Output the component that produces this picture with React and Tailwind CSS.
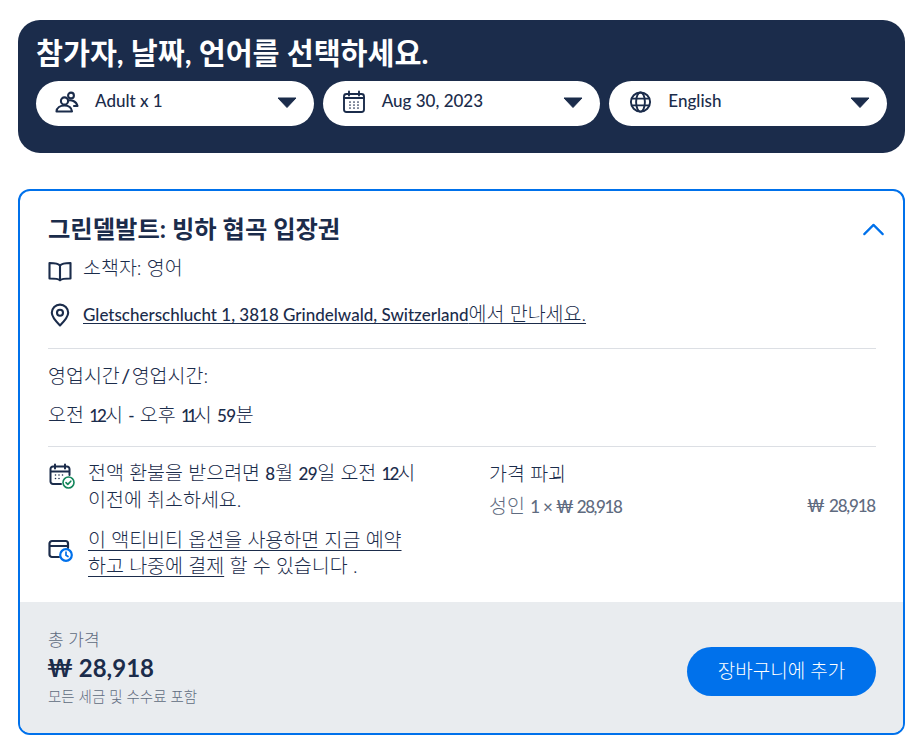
import React from 'react';
import { ChevronUp } from 'lucide-react';

const Caret = () => (
  <svg width="20" height="11" viewBox="0 0 20 11" className="-mt-[2px] ml-[1px] -mr-[1px] shrink-0">
    <path d="M1 1h18l-9 9.500z" fill="#1b2c4b" stroke="#1b2c4b" strokeLinejoin="round" />
  </svg>
);

const PeopleIcon = () => (
  <svg width="24" height="24" viewBox="0 0 24 24" fill="none" stroke="#1b2c4b" strokeWidth="2.100" strokeLinejoin="round" strokeLinecap="round">
    <circle cx="9.500" cy="11" r="3.600" />
    <circle cx="16" cy="5.500" r="2.900" />
    <path d="M1.500 21.500c.3-3.800 3.700-6 8-6s7 2.200 7.500 6z" />
    <path d="M13 10.500c3-.9 8.300.2 9.500 5.500h-3.500" />
  </svg>
);

const CalendarIcon = ({ size = 24 }) => (
  <svg width={size} height={size} viewBox="0 0 24 24" fill="none" stroke="#1b2c4b" strokeWidth="1.900" strokeLinecap="round">
    <rect x="2" y="4" width="20" height="18" rx="2.500" />
    <path d="M7 1.500v4M17 1.500v4M2 8h20" />
    <path d="M8 12h.01M12 12h.01M16 12h.01M8 15h.01M12 15h.01M16 15h.01M8 18h.01M12 18h.01M16 18h.01" strokeWidth="1.700" />
  </svg>
);

const GlobeIcon = () => (
  <svg width="24" height="24" viewBox="0 0 24 24" fill="none" stroke="#1b2c4b" strokeWidth="2" className="ml-[1px]">
    <circle cx="12" cy="12" r="10" />
    <ellipse cx="12" cy="12" rx="4.600" ry="10" />
    <path d="M2.600 8.500h18.800M2.600 15.500h18.800" />
  </svg>
);

const BookIcon = () => (
  <svg width="24" height="22" viewBox="0 0 24 22" fill="none" stroke="#1b2c4b" strokeWidth="2.100" strokeLinejoin="round" className="mt-[2px]">
    <path d="M12 5.500C10.500 3.500 8 3 1.500 3v15.500c6 0 9 .3 10.500 1.800 1.500-1.500 4.500-1.800 10.500-1.800V3C16 3 13.500 3.500 12 5.500zM12 5.500v14.800" />
  </svg>
);

const PinIcon = () => (
  <svg width="20" height="24" viewBox="0 0 20 24" fill="none" stroke="#1b2c4b" strokeWidth="2.100">
    <path d="M10 22.500C5 17.500 1.800 14 1.800 9.800a8.200 8.200 0 0 1 16.400 0c0 4.200-3.200 7.700-8.200 12.700z" strokeLinejoin="round" />
    <circle cx="10" cy="9.800" r="3" />
  </svg>
);

const CalendarCheckIcon = () => (
  <svg width="28" height="28" viewBox="0 0 28 28" fill="none" strokeLinecap="round">
    <path d="M13 21H5a2.500 2.500 0 0 1-2.500-2.500V6A2.500 2.500 0 0 1 5 3.500h14A2.500 2.500 0 0 1 21.500 6v6M2.500 8.500h19M7 1.500v4M17 1.500v4" stroke="#1b2c4b" strokeWidth="2" />
    <path d="M7.500 12h.01M11 12h.01M14.500 12h.01M7.500 15.500h.01M11 15.500h.01" stroke="#1b2c4b" strokeWidth="1.600" />
    <circle cx="20.500" cy="19.500" r="5.500" stroke="#12855a" strokeWidth="1.600" fill="#fff" />
    <path d="M18 19.600l1.800 1.800 3-3.200" stroke="#12855a" strokeWidth="1.600" strokeLinejoin="round" />
  </svg>
);

const CardClockIcon = () => (
  <svg width="26" height="24" viewBox="0 0 26 24" fill="none" strokeLinecap="round">
    <path d="M11 19H4a2.500 2.500 0 0 1-2.500-2.500v-11A2.500 2.500 0 0 1 4 3h13.500A2.500 2.500 0 0 1 20 5.500V10M1.500 8h18.500" stroke="#1b2c4b" strokeWidth="2.200" />
    <circle cx="18" cy="17" r="5.800" fill="#fff" stroke="#0071eb" strokeWidth="2.200" />
    <path d="M18 14v3.200l2 1.300" stroke="#0071eb" strokeWidth="1.700" />
  </svg>
);

// latin bits run smaller and heavier than the hangul around them
const L = ({ children, className = '' }) => <span className={`text-[17px] font-medium ${className}`}>{children}</span>;

const Pill = ({ icon, label }) => (
  <div className="flex h-[45px] flex-1 items-center rounded-full bg-white pl-[19px] pr-[18px]">
    <div className="-mt-[4px] flex w-[24px] justify-center">{icon}</div>
    <span className="ml-[16px] -mt-[5px] flex-1 text-[17px] font-medium text-[#1b2c4b]">{label}</span>
    <Caret />
  </div>
);

export default function App() {
  return (
    <div className="min-h-[743px] bg-white pl-[18px] pr-[4px] pt-[20px] font-['Lato','Noto_Sans_CJK_KR',sans-serif] text-[#1b2c4b]">
      {/* selector header */}
      <div className="h-[133px] rounded-[22px] bg-[#1b2c4b] px-[18px] pt-[15px]">
        <h1 className="text-[29.3px] leading-[36px] font-bold text-white">참가자, 날짜, 언어를 선택하세요.</h1>
        <div className="mt-[10px] flex gap-[9px]">
          <Pill icon={<PeopleIcon />} label="Adult x 1" />
          <Pill icon={<CalendarIcon />} label="Aug 30, 2023" />
          <Pill icon={<GlobeIcon />} label="English" />
        </div>
      </div>

      {/* option card */}
      <div className="mt-[36px] h-[546px] overflow-hidden rounded-[12px] border-2 border-[#0071eb]">
        <div className="h-[411px] pr-[27px] pl-[28px] text-[19.5px] font-light">
          <div className="flex h-[53px] items-end justify-between">
            <h2 className="text-[24.3px] leading-[30px] font-bold">그린델발트: 빙하 협곡 입장권</h2>
            <ChevronUp size={37} strokeWidth={1.4} color="#0071eb" className="-mr-[16px] -mb-[4px]" />
          </div>

          <div className="mt-[11px] flex h-[30px] items-center">
            <BookIcon />
            <span className="ml-[11px] -mt-[4px]">소책자: 영어</span>
          </div>

          <div className="mt-[15px] flex h-[30px] items-center">
            <div className="flex w-[24px] justify-center"><PinIcon /></div>
            <span className="ml-[11px] -mt-[2px] underline underline-offset-2">
              <L>Gletscherschlucht 1, 3818 Grindelwald, Switzerland</L>에서 만나세요.
            </span>
          </div>

          <div className="mt-[18px] border-t border-[#dcdfe4]" />

          <p className="mt-[14px] leading-[26px]">영업시간<span className="mx-[1.5px] font-medium">/</span>영업시간:</p>
          <p className="mt-[13px] leading-[26px]">
            오전 <L className="tracking-[-2px]">12</L>시 <L>-</L> 오후 <L className="tracking-[-3.5px]">11</L>시 <L className="tracking-[-0.5px]">59</L>분
          </p>

          <div className="mt-[17px] border-t border-[#dcdfe4]" />

          <div className="mt-[13px] flex">
            <div className="w-[441px]">
              <div className="flex items-start">
                <div className="mt-[3px] w-[28px] shrink-0"><CalendarCheckIcon /></div>
                <p className="ml-[12px] w-[330px] leading-[26px]">
                  전액 환불을 받으려면 <L>8</L>월 <L className="tracking-[-0.5px]">29</L>일 오전 <L className="tracking-[-2px]">12</L>시 이전에 취소하세요.
                </p>
              </div>
              <div className="mt-[14px] flex items-start">
                <div className="mt-[11px] w-[28px] shrink-0"><CardClockIcon /></div>
                <p className="ml-[12px] w-[320px] leading-[26px]">
                  <span className="underline underline-offset-3">이 액티비티 옵션을 사용하면 지금 예약하고 나중에 결제</span> 할 수 있습니다 .
                </p>
              </div>
            </div>
            <div className="flex-1">
              <p className="leading-[27px]">가격 파괴</p>
              <div className="mt-[5px] flex justify-between leading-[27px] text-[#5f6b80]">
                <span>성인 <L className="tracking-[-0.7px]">1 × ₩ <span className="tracking-[-1.4px]">28,918</span></L></span>
                <L className="mr-[1px]">₩ <span className="tracking-[-1.2px]">28,918</span></L>
              </div>
            </div>
          </div>
        </div>

        {/* total + add to cart */}
        <div className="flex h-[131px] items-center justify-between bg-[#e9ecef] pl-[28px] pr-[27px]">
          <div>
            <p className="text-[17px] leading-[20px] font-light text-[#5f6b80]">총 가격</p>
            <p className="mt-[3px] -ml-[1px] text-[24px] leading-[30px] font-bold">₩ 28,918</p>
            <p className="mt-[5px] text-[14.5px] leading-[18px] font-light text-[#5f6b80]">모든 세금 및 수수료 포함</p>
          </div>
          <button className="mt-[8px] h-[49px] w-[189px] rounded-full bg-[#0071eb] text-[19px] font-light text-white">장바구니에 추가</button>
        </div>
      </div>
    </div>
  );
}
